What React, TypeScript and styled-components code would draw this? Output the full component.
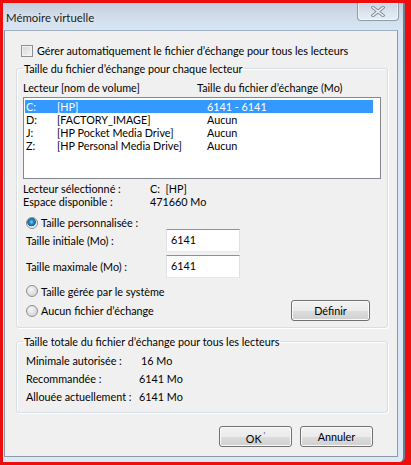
import React from "react";
import styled, { createGlobalStyle } from "styled-components";

const Global = createGlobalStyle`
  html, body { margin: 0; padding: 0; background: #ff0000; }
  body { font-family: Lato, "Noto Sans", sans-serif; font-size: 10.8px; color: #000; }
  * { box-sizing: border-box; }
`;

const Page = styled.div`
  width: 411px;
  height: 465px;
  background: #ee0c0c;
  padding: 3px 6px 3px 3px;
  display: flex;
`;

const Window = styled.div`
  flex: 1;
  display: flex;
  flex-direction: column;
  background: linear-gradient(180deg, #c3cfdb 0px, #cfdbe8 12px, #d8e6f4 27px, #dbe8f5 100%);
  border-right: 2px solid #6e7e8f;
  border-bottom-right-radius: 5px;
  padding: 0 5px 5px 1px;
`;

const TitleBar = styled.div`
  height: 27px;
  display: flex;
  align-items: center;
  justify-content: space-between;
  padding-left: 2px;
`;

const Title = styled.div`
  font-size: 11.4px;
  color: #1a1a1a;
  text-shadow: 0 0 6px rgba(255, 255, 255, 0.9);
  margin-top: 1px;
`;

const CloseButton = styled.div`
  align-self: flex-start;
  width: 42px;
  height: 18px;
  margin-right: -1px;
  border: 1px solid #8d9cab;
  border-top: none;
  border-radius: 0 0 4px 4px;
  background: linear-gradient(180deg, rgba(255,255,255,0.15), rgba(255,255,255,0.45));
  box-shadow: inset 0 0 0 1px rgba(255,255,255,0.5);
  display: flex;
  align-items: center;
  justify-content: center;
`;

const Client = styled.div`
  flex: 1;
  background: #f0f0f0;
  border: 1px solid #8c9aa8;
  border-top-color: #9fb0c2;
  padding: 12px 9px 0 11px;
  display: flex;
  flex-direction: column;
`;

const CheckRow = styled.label`
  display: flex;
  align-items: center;
  height: 15px;
  padding-left: 5px;
  gap: 4px;
`;

const CheckBox = styled.span`
  width: 12px;
  height: 12px;
  border: 1px solid #8e8f8f;
  background: linear-gradient(135deg, #d4d4d4, #f6f6f6);
  box-shadow: inset 0 0 0 1px #f4f4f4;
`;

const Group = styled.fieldset<{ $mt: number }>`
  margin: ${(p) => p.$mt}px 0 0 0;
  border: 1px solid #d5dfe5;
  border-radius: 3px;
  box-shadow: inset 1px 1px 0 #ffffff, 1px 1px 0 #ffffff;
  padding: 0 6px;
  min-width: 0;
`;

const Legend = styled.legend`
  padding: 0 1px;
  margin-left: 0px;
  line-height: 15px;
`;

const HeaderRow = styled.div`
  display: grid;
  grid-template-columns: 174px 1fr;
  height: 15px;
  line-height: 15px;
  margin-top: 4px;
`;

const ListBox = styled.div`
  margin-top: 2px;
  height: 82px;
  background: #fff;
  border: 1px solid #828790;
  padding: 2px 7px 0 1px;
`;

const ListRow = styled.div<{ $selected?: boolean }>`
  display: grid;
  grid-template-columns: 31px 150px 1fr;
  height: 13px;
  line-height: 13px;
  padding-left: 1px;
  background: ${(p) => (p.$selected ? "#3399ff" : "transparent")};
  color: ${(p) => (p.$selected ? "#ffffff" : "#000")};
`;

const InfoRow = styled.div<{ $mt?: number }>`
  display: grid;
  grid-template-columns: 127px 1fr;
  height: 13px;
  line-height: 13px;
  margin-top: ${(p) => p.$mt ?? 0}px;
`;

const RadioRow = styled.label<{ $mt: number; $h?: number }>`
  display: flex;
  align-items: center;
  height: ${(p) => p.$h ?? 14}px;
  margin-top: ${(p) => p.$mt}px;
  padding-left: 3px;
  gap: 3px;
`;

const Radio = styled.span<{ $checked?: boolean }>`
  width: 12px;
  height: 12px;
  border-radius: 50%;
  border: 1px solid #8e8f8f;
  background: ${(p) =>
    p.$checked
      ? "radial-gradient(circle at 45% 40%, #7fd3f9 0px, #2a8fcf 2px, #1b5e92 4px, #dfe3e6 4.6px, #f4f4f4 6px)"
      : "radial-gradient(circle at 40% 35%, #f7f7f7 0px, #d9d9d9 6px)"};
  flex: none;
`;

const FieldRow = styled.div<{ $mt: number }>`
  display: flex;
  align-items: center;
  height: 23px;
  margin-top: ${(p) => p.$mt}px;
  padding-left: 3px;
`;

const FieldLabel = styled.span`
  width: 140px;
`;

const TextInput = styled.div`
  width: 74px;
  height: 23px;
  background: #fff;
  border: 1px solid #abadb3;
  border-top-color: #8e9094;
  border-left-color: #e2e3ea;
  border-right-color: #dbdfe6;
  border-bottom-color: #e3e9ef;
  padding: 2px 0 0 4px;
  line-height: 15px;
`;

const Spacer = styled.div`
  flex: 1;
`;

const Button = styled.button<{ $w: number; $mr?: number }>`
  width: ${(p) => p.$w}px;
  height: 21px;
  margin-right: ${(p) => p.$mr ?? 0}px;
  font: inherit;
  color: #000;
  border: 1px solid #707070;
  border-radius: 3px;
  background: linear-gradient(180deg, #f2f2f2 0%, #ebebeb 50%, #dddddd 51%, #cfcfcf 100%);
  box-shadow: inset 0 0 0 1px #fbfbfb;
  padding: 0;
  line-height: 17px;
`;

const TotalsRow = styled.div`
  display: grid;
  grid-template-columns: 113px 1fr;
  height: 18px;
  line-height: 18px;
  padding-left: 3px;
  white-space: nowrap;
`;

const Value = styled.span<{ $shift?: number }>`
  padding-left: ${(p) => p.$shift ?? 0}px;
`;

const VSpace = styled.div<{ $h: number }>`
  height: ${(p) => p.$h}px;
`;

const Footer = styled.div`
  display: flex;
  justify-content: flex-end;
  gap: 8px;
  margin-top: 13px;
  padding-right: 15px;
`;

const Mark = styled.span`
  font-size: 8px;
  vertical-align: super;
  margin-left: 2px;
  color: #333;
`;

const drives = [
  { l: "C:", v: "[HP]", s: "6141 - 6141", sel: true },
  { l: "D:", v: "[FACTORY_IMAGE]", s: "Aucun" },
  { l: "J:", v: "[HP Pocket Media Drive]", s: "Aucun" },
  { l: "Z:", v: "[HP Personal Media Drive]", s: "Aucun" },
];

export default function App() {
  return (
    <Page>
      <Global />
      <Window>
        <TitleBar>
          <Title>Mémoire virtuelle</Title>
          <CloseButton>
            <svg width="14" height="11" viewBox="0 0 14 11">
              <path
                d="M2 1.5 L12 9.5 M12 1.5 L2 9.5"
                stroke="#7d8a98"
                strokeWidth="3.4"
                strokeLinecap="square"
                fill="none"
              />
              <path
                d="M2 1.5 L12 9.5 M12 1.5 L2 9.5"
                stroke="#f3f6f9"
                strokeWidth="1.6"
                strokeLinecap="square"
                fill="none"
              />
            </svg>
          </CloseButton>
        </TitleBar>
        <Client>
          <CheckRow>
            <CheckBox />
            Gérer automatiquement le fichier d’échange pour tous les lecteurs
          </CheckRow>
          <Group $mt={3}>
            <Legend>Taille du fichier d’échange pour chaque lecteur</Legend>
            <HeaderRow>
              <span>Lecteur [nom de volume]</span>
              <span>Taille du fichier d’échange (Mo)</span>
            </HeaderRow>
            <ListBox>
              {drives.map((d) => (
                <ListRow key={d.l} $selected={d.sel}>
                  <span>{d.l}</span>
                  <span>{d.v}</span>
                  <span>{d.s}</span>
                </ListRow>
              ))}
            </ListBox>
            <InfoRow $mt={3}>
              <span>Lecteur sélectionné :</span>
              <span>C:&nbsp; [HP]</span>
            </InfoRow>
            <InfoRow>
              <span>Espace disponible :</span>
              <span>471660 Mo</span>
            </InfoRow>
            <RadioRow $mt={8} $h={13}>
              <Radio $checked />
              Taille personnalisée :
            </RadioRow>
            <FieldRow $mt={0}>
              <FieldLabel>Taille initiale (Mo) :</FieldLabel>
              <TextInput>6141</TextInput>
            </FieldRow>
            <FieldRow $mt={3}>
              <FieldLabel>Taille maximale (Mo) :</FieldLabel>
              <TextInput>6141</TextInput>
            </FieldRow>
            <RadioRow $mt={6}>
              <Radio />
              Taille gérée par le système
            </RadioRow>
            <RadioRow $mt={2} $h={21}>
              <Radio />
              Aucun fichier d’échange
              <Spacer />
              <Button $w={79} $mr={11}>Définir</Button>
            </RadioRow>
            <VSpace $h={6} />
          </Group>
          <Group $mt={6}>
            <Legend>Taille totale du fichier d’échange pour tous les lecteurs</Legend>
            <VSpace $h={3} />
            <TotalsRow>
              <span>Minimale autorisée :</span>
              <Value $shift={2}>16 Mo</Value>
            </TotalsRow>
            <TotalsRow>
              <span>Recommandée :</span>
              <Value>6141 Mo</Value>
            </TotalsRow>
            <TotalsRow>
              <span>Allouée actuellement :</span>
              <Value>6141 Mo</Value>
            </TotalsRow>
            <VSpace $h={6} />
          </Group>
          <Footer>
            <Button $w={73}>
              OK<Mark>ʼ</Mark>
            </Button>
            <Button $w={73}>Annuler</Button>
          </Footer>
        </Client>
      </Window>
    </Page>
  );
}
